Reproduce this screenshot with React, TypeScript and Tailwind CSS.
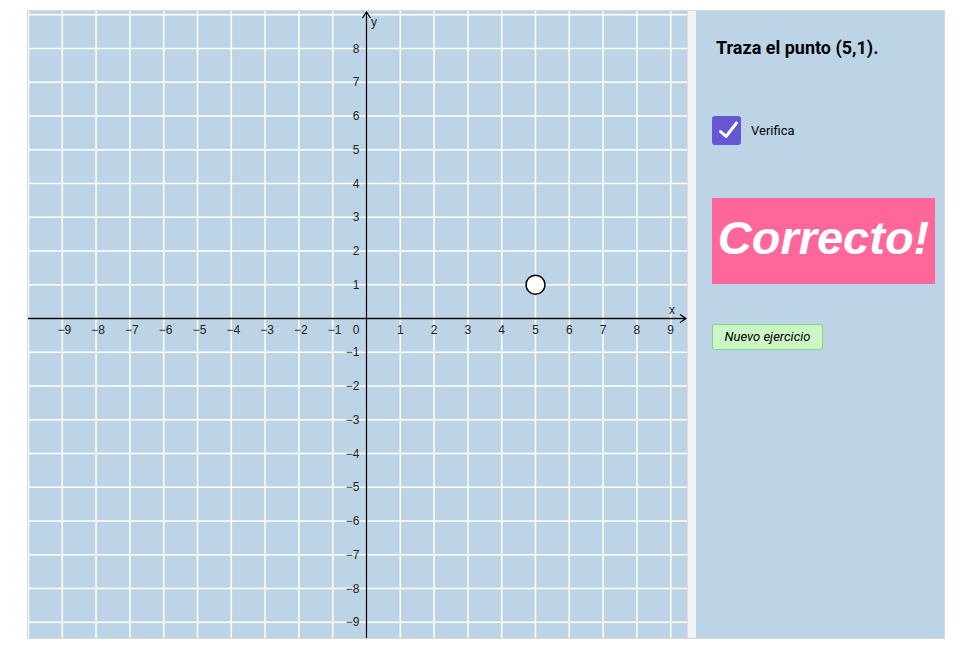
import React from "react";

const OX = 338.5;
const OY = 307.5;
const UX = 33.8;
const UY = 33.75;
const W = 659;
const H = 627;

const GraphView = () => {
   const xs: number[] = [];
   for (let i = -10; i <= 9; i++) xs.push(i);
   const ys: number[] = [];
   for (let j = -9; j <= 9; j++) ys.push(j);

   return (
      <svg width={W} height={H} className="block shrink-0">
         <rect x={0} y={0} width={W} height={H} fill="#bdd4e7" />

         {/* Grid */}
         {xs.map((i) => (
            <line
               key={"gx" + i}
               x1={OX + i * UX}
               y1={0}
               x2={OX + i * UX}
               y2={H}
               stroke="#ffffff"
               strokeWidth={1.5}
            />
         ))}
         {ys.map((j) => (
            <line
               key={"gy" + j}
               x1={0}
               y1={OY - j * UY}
               x2={W}
               y2={OY - j * UY}
               stroke="#ffffff"
               strokeWidth={1.5}
            />
         ))}

         {/* Axes */}
         <line x1={0} y1={OY} x2={W - 1} y2={OY} stroke="#000" strokeWidth={1.3} />
         <polyline
            points={`${W - 7},${OY - 4} ${W - 1},${OY} ${W - 7},${OY + 4}`}
            fill="none"
            stroke="#000"
            strokeWidth={1.3}
         />
         <line x1={OX} y1={H} x2={OX} y2={1} stroke="#000" strokeWidth={1.3} />
         <polyline
            points={`${OX - 4},${7} ${OX},${1} ${OX + 4},${7}`}
            fill="none"
            stroke="#000"
            strokeWidth={1.3}
         />

         {/* Labels */}
         <g fontFamily="'Liberation Sans', Arial, sans-serif" fontSize={12} fill="#222">
            {xs
               .filter((i) => i !== 0 && i >= -9)
               .map((i) => (
                  <text
                     key={"lx" + i}
                     x={OX + i * UX + (i < 0 ? 2 : 0)}
                     y={OY + 15}
                     textAnchor="middle"
                  >
                     {i < 0 ? "\u2212" + Math.abs(i) : i}
                  </text>
               ))}
            {ys
               .filter((j) => j !== 0 && j <= 8)
               .map((j) => (
                  <text
                     key={"ly" + j}
                     x={OX - 7}
                     y={OY - j * UY + 4}
                     textAnchor="end"
                  >
                     {j < 0 ? "\u2212" + Math.abs(j) : j}
                  </text>
               ))}
            <text x={OX - 7} y={OY + 15} textAnchor="end">
               0
            </text>
            <text x={644} y={OY - 5} textAnchor="middle" fontSize={12}>
               x
            </text>
            <text x={346} y={15} textAnchor="middle" fontSize={12}>
               y
            </text>
         </g>

         {/* Point (5,1) */}
         <circle
            cx={OX + 5 * UX}
            cy={OY - 1 * UY}
            r={9.5}
            fill="#ffffff"
            stroke="#000"
            strokeWidth={1.5}
         />
      </svg>
   );
};

const App = () => {
   return (
      <div className="min-h-screen bg-white pl-[27px] pt-[10px]">
         <div className="flex w-[918px] h-[629px] border border-[#d6d9dc]">
            <GraphView />

            {/* Divider */}
            <div className="w-[9px] shrink-0 bg-[#f3f3f3] border-l border-[#d9dde0]" />

            {/* Side panel */}
            <div
               className="flex-1 flex flex-col items-start bg-[#bdd4e7] pl-4 text-black"
               style={{ fontFamily: "Roboto, 'Liberation Sans', sans-serif" }}
            >
               <p className="mt-[25px] ml-1 text-[18px] leading-6 font-bold">
                  Traza el punto (5,1).
               </p>

               <div className="mt-[56px] flex items-center gap-[10px]">
                  <div className="w-[29px] h-[29px] rounded-[3px] bg-[#6557d2] flex items-center justify-center">
                     <svg width="29" height="29" viewBox="0 0 29 29">
                        <polyline
                           points="8.5,15.5 14,20.5 24.5,7"
                           fill="none"
                           stroke="#ffffff"
                           strokeWidth={3}
                           strokeLinecap="round"
                           strokeLinejoin="round"
                        />
                     </svg>
                  </div>
                  <span className="text-[13px]">Verifica</span>
               </div>

               <div className="mt-[53px] w-[223px] h-[86px] bg-[#ff6699] flex items-center justify-center">
                  <span className="text-white font-bold italic text-[47px] leading-none -mt-2 font-['Liberation_Sans',Arial,sans-serif]">
                     Correcto!
                  </span>
               </div>

               <button
                  type="button"
                  className="mt-[40px] w-[111px] h-[26px] rounded-[3px] bg-[#ccf7c4] border border-[#7fd87a] text-[13px] italic text-black"
               >
                  Nuevo ejercicio
               </button>
            </div>
         </div>
      </div>
   );
};

export default App;
